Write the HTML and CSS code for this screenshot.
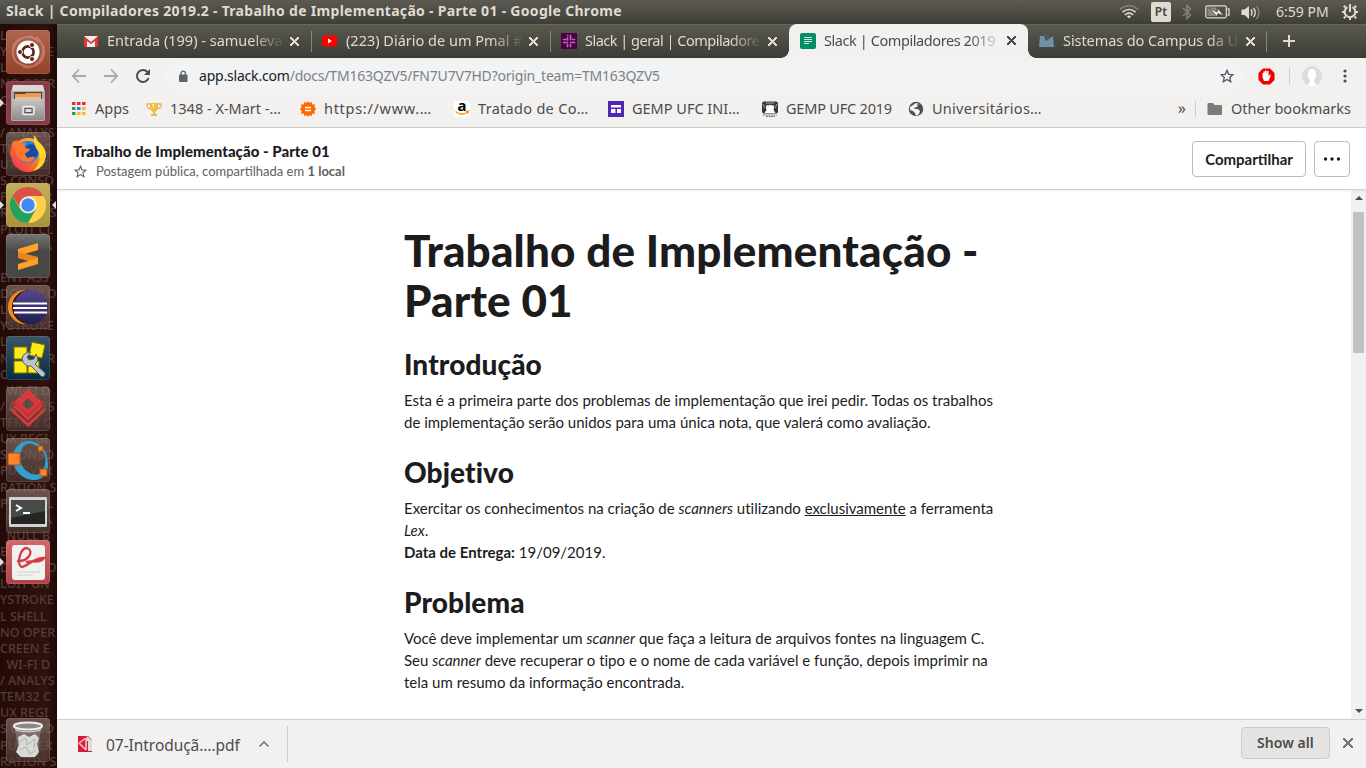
FILE: index.html
```html
<!DOCTYPE html>
<html lang="pt-BR">
<head>
<meta charset="utf-8">
<title>Slack | Compiladores 2019.2</title>
<link rel="stylesheet" href="styles.css">
</head>
<body>
<div class="screen">
<header class="panel">
  <span class="panel-title">Slack | Compiladores 2019.2 - Trabalho de Implementação - Parte 01 - Google Chrome</span>
  <div class="tray">
    <svg class="wifi" width="20" height="14" viewBox="0 0 20 14" fill="none" stroke-width="1.6"><path d="M.8 4.4Q10-3 19.2 4.4" stroke="#85827b"/><path d="M3.4 7.2Q10 1.8 16.6 7.2M5.8 9.8Q10 6.4 14.2 9.8" stroke="#dfdbd2"/><path d="M7.8 11.3Q10 9.8 12.2 11.3L10 13.5z" fill="#dfdbd2"/></svg>
    <span class="lang">Pt</span>
    <svg class="bt" width="10" height="16" viewBox="0 0 10 16" fill="none" stroke="#85827b" stroke-width="1.5"><path d="M1 4l7.500 7L5 14.500v-13L8.500 5 1 12"/></svg>
    <svg class="battery" width="25" height="14" viewBox="0 0 25 14"><rect x=".8" y=".8" width="20.500" height="12" rx="1.500" fill="none" stroke="#dfdbd2" stroke-width="1.300"/><rect x="2.500" y="2.500" width="9" height="8.600" fill="#898780"/><path d="M22.500 4h1.500v6h-1.500" fill="none" stroke="#dfdbd2" stroke-width="1.300"/><path d="M4 3l8 4 1-3.500 6 7.500-6-2.500-1 3z" fill="#eeebe3" stroke="#47463f" stroke-width=".7"/></svg>
    <svg class="volume" width="20" height="15" viewBox="0 0 20 15" fill="none" stroke-width="1.500"><path d="M.5 4.500h3L8 1v13l-4.500-4h-3z" fill="#dfdbd2"/><path d="M10 4.500q2 3 0 6M12.500 3q3.500 4.500 0 9" stroke="#dfdbd2"/><path d="M15.500 1q5 6.500 0 13" stroke="#85827b"/></svg>
    <span class="clock">6:59 PM</span>
    <svg class="gear" width="18" height="18" viewBox="0 0 18 18" fill="none" stroke="#dfdbd2"><path d="M6.500 4.200a5.300 5.300 0 1 0 5 0" stroke-width="2"/><path d="M9 1v8M4.500 4.500L2.800 2.800M13.500 4.500l1.700-1.700M3.500 9H1M14.500 9H17M4.500 13.500l-1.700 1.700M13.500 13.500l1.700 1.700M9 14.500V17" stroke-width="2"/></svg>
  </div>
</header>
<div class="desktop">
<aside class="launcher">
<pre class="wallpaper">LOIT GN
YSTROKE
L SHELL
NO OPER
CREEN E
  WI-FI D
/ ANALYS
TEM32 C
UX REGI
S CONSO
PU OVER
RATION S
PLOIT CL
  MALWA
  NULL B
ENT ASS
DOWNLO
LOIT GN
YSTROKE
L SHELL
NO OPER
CREEN E
  WI-FI D
/ ANALYS
TEM32 C
UX REGI
S CONSO
PU OVER
RATION S
PLOIT CL
  MALWA
  NULL B
ENT ASS
DOWNLO
LOIT GN
YSTROKE
L SHELL
NO OPER
CREEN E
  WI-FI D
/ ANALYS
TEM32 C
UX REGI
S CONSO
PU OVER
RATION S</pre>
  <div class="tile ubuntu"><svg viewBox="0 0 44 44"><g fill="none" stroke="#e1a891" stroke-opacity=".45" stroke-width="2"><path d="M8 27C1 10 22 1 33 12M13 34C-2 23 13 3 27 7M37 15c6 18-13 28-25 17M30 7c15 10 4 34-13 30"/></g><circle cx="22" cy="22" r="11.500" fill="#fff"/><circle cx="22" cy="22" r="5.600" fill="none" stroke="#5d2416" stroke-width="2.600"/><g fill="#5d2416" stroke="#fff"><circle cx="14" cy="22" r="2.500"/><circle cx="26" cy="15" r="2.500"/><circle cx="26" cy="29" r="2.500"/></g></svg></div>
  <div class="tile files running"><svg viewBox="0 0 44 44"><path d="M7 4h30l2 8H5z" fill="#d9d9d8"/><path d="M5 10h34v29q0 1-2 1H7q-2 0-2-1z" fill="#aaa"/><path d="M8 11h28v8H8z" fill="#65412f"/><path d="M9 13h10l1-1h15v7H9z" fill="#e99b57"/><path d="M9 16h26v3H9z" fill="#f0bd87"/><path d="M6 18h32v21H6z" fill="url(#metal)"/><rect x="17" y="25.500" width="11" height="8" rx="1" fill="none" stroke="#eee" stroke-width="1.500"/><rect x="19" y="27.500" width="7" height="4" fill="#ddd" stroke="#555"/></svg></div>
  <div class="tile"><svg viewBox="0 0 44 44"><circle cx="22" cy="23" r="17" fill="url(#fire)"/><path d="M4 24Q4 14 8 8l3 6 7-1-2 5z" fill="#ff5a36"/><circle cx="22" cy="20" r="11" fill="#1686e6"/><path d="M21 13q8-3 11 5 1 9-8 9-8-3-3-14" fill="#194aa3"/><path d="M6 11l5-3 2 5q4-3 7-2-2 3-1 5l5 1q-1 3-5 4 0 4 3 5 4-2 7-1-2 6-8 5-9-1-12-10z" fill="#ff7630"/><path d="M28 3q3 3 4 7 8 5 8 14-2 13-13 15 10-9 5-20-5-6-4-16" fill="#ffd62e"/></svg></div>
  <div class="tile chrome running focused"><svg viewBox="0 0 44 44"><circle cx="22" cy="22" r="18" fill="#ffd04c"/><path d="M6.400 13a18 18 0 0 1 31.200 0H22l-6 15z" fill="#dc5145"/><path d="M6.400 13a18 18 0 0 0 15.600 27l8-14-8 4-8-4z" fill="#24a15c"/><circle cx="22" cy="22" r="8.500" fill="#f5f3e8"/><circle cx="22" cy="22" r="6.700" fill="#4688f1"/></svg></div>
  <div class="tile sublime"><svg viewBox="0 0 44 44"><path d="M12 15l20-6v7l-20 6z" fill="#ffa02b"/><path d="M12 18l20 5v7l-20-6z" fill="#f08517"/><path d="M12 30l20-6v6l-20 6z" fill="#ffa02b"/></svg></div>
  <div class="tile"><svg viewBox="0 0 44 44"><circle cx="19" cy="22" r="17" fill="#f28a1f"/><circle cx="23" cy="22" r="17" fill="#30150e"/><circle cx="25" cy="22" r="17" fill="url(#violet)"/><path d="M7 18.500h34M7 23h34M8 27.500h33" stroke="#fff" stroke-width="2"/></svg></div>
  <div class="tile tools"><svg viewBox="0 0 44 44"><g fill="#ffeb13" stroke="#7c7108"><path d="M8 11h13v12H8zM8 25h13v12H8zM22 25h11v12H22zM26 6l13 3-3 13-13-3z"/></g><path d="M16 23q1-7 9-7l-4 5 2 3 5-1 2-5q4 7-1 10l10 9q1 3-3 4L25 30q-7 1-9-7" fill="#bbc5cb" stroke="#55626a"/></svg></div>
  <div class="tile"><svg viewBox="0 0 44 44"><path fill-rule="evenodd" d="M22 2l16 15-16 15L6 17zM22 11l-6 6 6 6 6-6z" fill="#d63b3c"/><path d="M22 27l16-14v5L22 33 6 18v-5z" fill="#bd3033"/><path d="M5 22l17 16 17-16M9 19l13 13 13-13" stroke="#d63b3c" fill="none" stroke-width="3"/></svg></div>
  <div class="tile"><svg viewBox="0 0 44 44"><path fill-rule="evenodd" d="M7 21C7 5 22-2 34 7q8 7 8 19 0 14-12 16C17 43 7 32 7 21m7-3q0 11 8 16 9 6 15-2 6-13-3-22Q17-2 14 18" fill="#31a0d0"/><g fill="#ff8428" stroke="#a64e19"><path d="M2 15h12v12H2zM32 8h5v5h-5zM34 31h7v7h-7z"/></g></svg></div>
  <div class="tile"><svg viewBox="0 0 44 44"><rect x="3" y="8" width="38" height="30" rx="1" fill="#d2d2d2"/><rect x="5" y="11" width="34" height="24" fill="#242624"/><path d="M5 11h34v11L5 29z" fill="#484a48"/><path d="M10 16l5 3-5 3" fill="none" stroke="#fff" stroke-width="2"/><path d="M17 24h7" stroke="#fff" stroke-width="2"/></svg></div>
  <div class="tile pdf running"><svg viewBox="0 0 44 44"><rect x="6" y="5" width="33" height="35" rx="3" fill="#f1f1ef"/><path d="M11 21C22 22 29 11 21 8 14 8 10 25 16 27 22 26 27 18 38 18 34 24 27 20 20 22" fill="none" stroke="#d63b43" stroke-width="2.300"/><path d="M11 32h23M11 35h16" stroke="#cfcfcd"/></svg></div>
  <div class="tile trash"><svg viewBox="0 0 44 44"><path d="M9 8l3 29q10 5 20 0l3-29" fill="#948d88" fill-opacity=".55"/><path d="M12 19l6-3 5 3 6-3 4 4-2 6 2 8-4 5H15l-5-5 3-7z" fill="#d8dad6"/><path d="M13 24l7-4 1 7 8-6-1 9M13 32l7-3 4 7 6-4" fill="none" stroke="#aeb1ad"/><ellipse cx="22" cy="8" rx="14" ry="3.500" fill="#8c8883" stroke="#eee" stroke-width="2"/><path d="M9 12q13 4 26 0" fill="none" stroke="#ddd"/></svg></div>
</aside>
<main class="browser">
  <nav class="tabs">
    <div class="tab"><svg class="favicon" viewBox="0 0 16 16"><path d="M1 3h14v11H1z" fill="#eee"/><path d="M1 14V3l7 6 7-6v11h-3V8l-4 3-4-3v6z" fill="#df3735"/></svg><span class="tab-label t1">Entrada (199) - samueleva</span><i class="close"></i></div>
    <div class="tab sep"><svg class="favicon" viewBox="0 0 16 16"><rect y="2.500" width="15" height="11" rx="2.500" fill="#f00"/><path d="M6 5.500v5L10 8z" fill="#fff"/></svg><span class="tab-label t2">(223) Diário de um Pmal #</span><i class="close"></i></div>
    <div class="tab sep"><svg class="favicon" viewBox="0 0 16 16"><path d="M0 0h16v16H0z" fill="#4b0048"/><g fill="none" stroke="#b26baf" stroke-width="1.700" stroke-linecap="round"><path d="M6.500 4.800V7M2.500 6.500h2.200M9.500 2.500v4M11.500 6.500h2M2.500 9.500h4M6.500 11.500v2M9.500 9.500h4M9.500 11.500v2M6.500 2.500h.1"/></g></svg><span class="tab-label t3">Slack | geral | Compiladore</span><i class="close"></i></div>
    <div class="tab active"><svg class="favicon" viewBox="0 0 16 16"><rect width="16" height="16" rx="2" fill="#058c62"/><path d="M4 4.500h8M4 6.500h8M4 8.500h8M4 10.500h5" stroke="#c7eee0"/></svg><span class="tab-label t4">Slack | Compiladores 2019</span><i class="close"></i></div>
    <div class="tab"><svg class="favicon" viewBox="0 0 16 16"><path d="M0 14l1-11h4l2 5 7-5 1 11z" fill="#7090a5"/><path d="M6 2q3-1 4 2L8 7z" fill="#4e5f68"/></svg><span class="tab-label t5">Sistemas do Campus da U</span><i class="close"></i></div>
    <div class="newtab sep"></div>
  </nav>
  <div class="toolbar">
    <svg class="nav" width="16" height="16" viewBox="0 0 16 16" fill="none" stroke="#aaa9a8" stroke-width="1.800"><path d="M15 8H2M8 1.500L1.800 8 8 14.500"/></svg>
    <svg class="nav" width="16" height="16" viewBox="0 0 16 16" fill="none" stroke="#aaa9a8" stroke-width="1.800"><path d="M1 8h13M8 1.500L14.200 8 8 14.500"/></svg>
    <svg class="nav" width="16" height="16" viewBox="0 0 16 16" fill="none" stroke="#4c4c4c" stroke-width="2"><path d="M13.600 10A6 6 0 1 1 12.500 4"/><path d="M15 1v6H9z" fill="#4c4c4c" stroke="none"/></svg>
    <div class="omnibox">
      <svg width="10" height="13" viewBox="0 0 10 13"><rect x="1" y="4.500" width="8.500" height="7.500" rx=".8" fill="#5f6368"/><path d="M3 5V3.300a2.200 2.200 0 0 1 4.400 0V5" fill="none" stroke="#5f6368" stroke-width="1.300"/></svg>
      <span class="url"><b>app.slack.com</b>/docs/TM163QZV5/FN7U7V7HD?origin_team=TM163QZV5</span>
      <svg class="bookmark-star" width="14" height="14" viewBox="0 0 14 14"><path d="M7 1.300l1.700 4 4.200.4-3.200 2.800 1 4.200L7 10.500l-3.700 2.200 1-4.200L1.100 5.700l4.200-.4z" fill="none" stroke="#505357" stroke-width="1.300"/></svg>
    </div>
    <svg class="adblock" width="17" height="17" viewBox="0 0 17 17"><path d="M5 .5h7L16.500 5v7L12 16.500H5L.5 12V5z" fill="#f20000"/><path d="M4.500 9V5h1v3V3.500h1.500V7 2.500h1.500V7l.5-4h1.500v5L12 6.500q1 0 .8 1L10.500 13H6z" fill="#fff"/></svg>
    <i class="rule"></i>
    <svg class="avatar" width="20" height="20" viewBox="0 0 20 20"><circle cx="10" cy="10" r="10" fill="#dcdcdc"/><path d="M6 8q0-5 4-5t4 5q0 5-2 6v1l2 4q-4 2-8 0l2-4v-1Q6 13 6 8" fill="#fff"/></svg>
    <svg width="4" height="14" viewBox="0 0 4 14" fill="#4c4c4c"><circle cx="2" cy="2" r="1.600"/><circle cx="2" cy="7" r="1.600"/><circle cx="2" cy="12" r="1.600"/></svg>
  </div>
  <div class="bookmarks">
    <a class="bm b0"><svg viewBox="0 0 16 16"><path d="M1 1h3.500v3H1zM6 1h3.500v3H6zM11 1h3.500v3H11z" fill="#e8283b"/><path d="M1 6h3.500v3H1z" fill="#24a14d"/><path d="M6 6h3.500v3H6z" fill="#347de7"/><path d="M11 6h3.500v3H11zM11 11h3.500v3H11zM6 11h3.500v3H6z" fill="#fbb520"/><path d="M1 11h3.500v3H1z" fill="#24a14d"/></svg><span>Apps</span></a>
    <a class="bm b1"><svg viewBox="0 0 16 16"><path d="M4 2h8v3q0 4-3 6v2h2v2H5v-2h2v-2Q4 9 4 5z" fill="#efbd45"/><path d="M4 3H.8q0 5 5 5M12 3h3.200q0 5-5 5" fill="none" stroke="#e8b94e" stroke-width="1.400"/><path d="M6 3h2v5z" fill="#fff1a6"/></svg><span>1348 - X-Mart -…</span></a>
    <a class="bm b2"><svg viewBox="0 0 16 16"><path d="M8 0l1.300 2L11.500.7l.8 2.800 2.800-.3-.8 2.600L16 8l-1.700 2.200.8 2.600-2.800-.3-.8 2.800L9.300 14 8 16l-1.300-2-2.200 1.300-.8-2.800-2.800.3.8-2.600L0 8l1.700-2.200-.8-2.600 2.800.3.8-2.800L6.700 2z" fill="#f60"/><path d="M5 6.500h6M5 9.500h6" stroke="#fff" stroke-width="1.500"/></svg><span>https://www.…</span></a>
    <a class="bm b3"><svg viewBox="0 0 16 16"><rect width="16" height="16" rx="2" fill="#fff"/><text x="8" y="10" text-anchor="middle" class="amazon">a</text><path d="M1.500 10.500q6 5 12 .5M11.500 10.500l3-.3-.8 2.500" fill="none" stroke="#f6a21b" stroke-width="1.500"/></svg><span>Tratado de Co…</span></a>
    <a class="bm b4"><svg viewBox="0 0 16 16"><path d="M0 0h16v16H0z" fill="#5125b5"/><path d="M3 4h10v2.500H3zM3 8h4.500v4H3zM9 8h4v4H9z" fill="#fff"/></svg><span>GEMP UFC INI…</span></a>
    <a class="bm b5"><svg viewBox="0 0 16 16"><rect y=".5" width="16" height="12" rx="2" fill="#35383a"/><path d="M4.500 4l2 .5Q8 3 9.500 4.500l2-.5q1 3 0 5l2 3h-11l2-3q-1-2 0-5" fill="#fff"/><path d="M1 3l2 4M15 3l-2 4M4 2h8" stroke="#aaa"/><path d="M1 14h14M4 15.500h9" stroke="#777" stroke-dasharray="2 .6"/></svg><span>GEMP UFC 2019</span></a>
    <a class="bm b6"><svg viewBox="0 0 16 16"><circle cx="8" cy="8" r="7.200" fill="#4d4e50"/><path d="M2 6l3-2 3-2 3 1-2 3-3 1 1 1h3l2 2-1 3-3 2-1-3-2-2-3-1z" fill="#f2f1f0"/><path d="M9 3l3 1 2 3-4-1z" fill="#4d4e50"/></svg><span>Universitários…</span></a>
    <span class="overflow">»</span><i class="rule"></i>
    <a class="bm b7"><svg viewBox="0 0 16 16"><path d="M.5 3q0-1 1-1H6l1.500 2H14q1 0 1 1v8q0 1-1 1H1.500q-1 0-1-1z" fill="#7b7b7b"/></svg><span>Other bookmarks</span></a>
  </div>
  <section class="post-header">
    <div class="post-meta">
      <div class="post-name">Trabalho de Implementação - Parte 01</div>
      <div class="post-info"><svg width="13" height="13" viewBox="0 0 13 13"><path d="M6.500 1.200l1.500 3.700 4 .3-3.100 2.600 1 3.900-3.400-2.100-3.400 2.100 1-3.900L1 5.200l4-.3z" fill="none" stroke="#616061" stroke-width="1.100"/></svg><span>Postagem pública, compartilhada em <b>1 local</b></span></div>
    </div>
    <div class="actions"><button class="share">Compartilhar</button><button class="more"><svg width="18" height="4" viewBox="0 0 18 4" fill="#1d1c1d"><circle cx="2.500" cy="2" r="1.700"/><circle cx="9" cy="2" r="1.700"/><circle cx="15.500" cy="2" r="1.700"/></svg></button></div>
  </section>
  <div class="viewport">
    <article class="doc">
      <h1>Trabalho de Implementação - Parte 01</h1>
      <h2>Introdução</h2>
      <p>Esta é a primeira parte dos problemas de implementação que irei pedir. Todas os trabalhos<br>de implementação serão unidos para uma única nota, que valerá como avaliação.</p>
      <h2>Objetivo</h2>
      <p>Exercitar os conhecimentos na criação de <em>scanners</em> utilizando <u>exclusivamente</u> a ferramenta<br><em>Lex</em>.<br><b>Data de Entrega:</b> 19/09/2019.</p>
      <h2>Problema</h2>
      <p>Você deve implementar um <em>scanner</em> que faça a leitura de arquivos fontes na linguagem C.<br>Seu <em>scanner</em> deve recuperar o tipo e o nome de cada variável e função, depois imprimir na<br>tela um resumo da informação encontrada.</p>
    </article>
    <div class="scrollbar"><i class="up"></i><i class="thumb"></i><i class="down"></i></div>
  </div>
  <footer class="downloads">
    <div class="download"><svg width="15" height="17" viewBox="0 0 15 17"><path d="M0 0h10l4 4v12H0z" fill="#d31c38"/><path d="M9 0l5 4.500V15h-4V5H8z" fill="#ddd"/><path d="M1 7l7-5M1 7l7 7M8 2v12" stroke="#f7c5cc" stroke-width="1.500" fill="none"/></svg><span>07-Introduçã….pdf</span><svg class="chevron" width="12" height="8" viewBox="0 0 12 8"><path d="M1.500 6.500L6 2l4.500 4.500" fill="none" stroke="#777" stroke-width="1.600"/></svg></div>
    <button class="showall">Show all</button><i class="close"></i>
  </footer>
</main>
</div>
</div>
<svg class="defs" width="0" height="0"><defs><linearGradient id="metal" x2="0" y2="1"><stop stop-color="#c5c5c4"/><stop offset="1" stop-color="#8c8c8b"/></linearGradient><linearGradient id="fire" x1="1" y1="0" x2="0" y2="1"><stop stop-color="#ffdc30"/><stop offset=".55" stop-color="#ff6a2b"/><stop offset="1" stop-color="#e52864"/></linearGradient><linearGradient id="violet" x2="0" y2="1"><stop stop-color="#54488e"/><stop offset="1" stop-color="#231d52"/></linearGradient></defs></svg>
</body>
</html>
```
FILE: styles.css
```css
*{box-sizing:border-box}
body{margin:0;overflow:hidden;font-family:"Noto Sans",sans-serif}
button{font:inherit;padding:0;margin:0}
.defs{position:absolute}
.screen{width:1366px;height:768px;display:flex;flex-direction:column;overflow:hidden}
.panel{height:24px;flex:none;display:flex;align-items:center;justify-content:space-between;padding:0 7px 0 6px;background:linear-gradient(#5c5a50,#3e3d39);color:#dfdbd2}
.panel-title{font-weight:700;font-size:14px;line-height:20px;margin-top:-2px;letter-spacing:.305px;white-space:nowrap}
.tray{display:flex;align-items:center}
.lang{width:20px;height:20px;margin-left:12px;border-radius:2px;background:#dfdbd2;color:#44433e;font-size:12px;font-weight:600;line-height:20px;text-align:center}
.bt{margin-left:11px}.battery{margin-left:13px}.volume{margin-left:11px}
.clock{width:53px;margin:-2px 0 0 15px;font-size:14px;white-space:nowrap}
.gear{margin-left:12px}
.desktop{flex:1;display:flex;min-height:0}
.launcher{position:relative;width:57px;flex:none;overflow:hidden;display:flex;flex-direction:column;gap:7px;padding:6px 7px 6px 6px;background:linear-gradient(90deg,#240b08,#30120d 80%,#1c0907)}
.wallpaper{position:absolute;left:0;top:4px;margin:0;font:500 12.500px/16.120px "Noto Sans",sans-serif;color:#573c37}
.tile{position:relative;width:44px;height:44px;flex:none;border-radius:4px;background:linear-gradient(rgba(150,128,122,.6),rgba(82,62,58,.6));box-shadow:inset 0 0 0 1px rgba(210,190,180,.16)}
.tile svg{display:block;width:44px;height:44px}
.tile.ubuntu{background:linear-gradient(#ae6550,#94412a)}
.tile.files{background:#873a49}
.tile.chrome{background:linear-gradient(#c3ae5a,#a8933c)}
.tile.sublime{background:linear-gradient(#777675,#484746 40%)}
.tile.tools{background:linear-gradient(#3c5568,#082c43)}
.tile.pdf{background:linear-gradient(#d16a6b,#b04449)}
.trash{margin-top:auto}
.running::before,.focused::after{content:"";position:absolute;top:18px;left:-6px;border:4px solid transparent;border-left-color:#ddd;border-right:0}
.focused::after{left:46px;border-left:0;border-right:4px solid #ddd}
.browser{flex:1;display:flex;flex-direction:column;min-width:0;background:#fff}
.tabs{height:34px;flex:none;display:flex;padding-left:15px;background:linear-gradient(#5b5a4f,#3c3b37);border-top:1px solid #68675a}
.tab{position:relative;width:239px;height:33px;flex:none;display:flex;align-items:center;padding:0 11px 1px 11px;color:#dfdbd2;font-size:14.500px}
.sep::before{content:"";position:absolute;left:0;top:6px;width:1px;height:21px;background:#87867f}
.favicon{width:16px;height:16px;flex:none}
.tab-label{width:178px;margin:-2px 0 0 8px;overflow:hidden;white-space:nowrap;-webkit-mask-image:linear-gradient(90deg,#000 145px,transparent 178px);mask-image:linear-gradient(90deg,#000 145px,transparent 178px)}
.t3{letter-spacing:-.500px}.t4{letter-spacing:-.420px}.t5{letter-spacing:-.080px}
.close{position:relative;width:9px;height:9px;flex:none;margin-left:5px;background:linear-gradient(45deg,transparent 44%,currentColor 44% 56%,transparent 56%),linear-gradient(-45deg,transparent 44%,currentColor 44% 56%,transparent 56%)}
.active{margin-top:-1px;height:34px;border-radius:8px 8px 0 0;background:#f2f1f0;color:#4c4c4c}
.active::before,.active::after{content:"";position:absolute;bottom:0;width:8px;height:8px;background:radial-gradient(circle at 0 0,transparent 7.500px,#f2f1f0 8px)}
.active::before{left:-8px}.active::after{right:-8px;background:radial-gradient(circle at 100% 0,transparent 7.500px,#f2f1f0 8px)}
.newtab{position:relative;width:46px;margin-left:-1px;background:linear-gradient(#dfdbd2,#dfdbd2) 17px 15px/12px 2px no-repeat,linear-gradient(#dfdbd2,#dfdbd2) 22px 10px/2px 12px no-repeat}
.toolbar{height:36px;flex:none;display:flex;align-items:center;padding:0 19px 0 14px;background:#f2f1f0}
.nav{margin-right:16px;flex:none}
.omnibox{width:1078px;flex:none;height:28px;border-radius:14px;background:#f1f3f4;display:flex;align-items:center;padding:0 9px 0 13px;margin-left:-2px}
.url{margin:-2px 0 0 11px;font-size:14px;color:#7d8185;white-space:nowrap;letter-spacing:-.200px}
.url b{font-weight:400;color:#202124}
.bookmark-star{margin-left:auto}
.adblock{margin-left:15px;flex:none}
.rule{width:1px;height:16px;background:#cfcecd;flex:none}
.toolbar .rule{margin-left:14px}
.avatar{margin-left:12px;flex:none}
.toolbar>svg:last-child{margin-left:auto}
.bookmarks{height:34px;flex:none;display:flex;align-items:center;padding:0 14px 4px;background:#f2f1f0;border-bottom:1px solid #cdccca;font-size:14.500px;color:#4c4c4c}
.bm{display:flex;align-items:center;gap:8px;white-space:nowrap}
.bm span{margin-top:-2px}
.bm svg{width:16px;height:16px;flex:none}
.b0{width:75px}.b1{width:154px}.b2{width:154px;letter-spacing:.700px}.b3{width:154px;letter-spacing:.300px}.b4{width:154px}.b5{width:146px;letter-spacing:-.200px}.b6{width:134px;letter-spacing:.270px}
.amazon{font:700 15px "Noto Sans",sans-serif;letter-spacing:0}
.overflow{margin:-2px 0 0 auto;font-size:16px}
.bookmarks .rule{margin:0 11px 0 9px}
.b7 span{width:121px}
.post-header{height:62px;flex:none;display:flex;justify-content:space-between;padding:13px 16px 0;border-bottom:1px solid #d4d4d4;box-shadow:0 1px 2px rgba(0,0,0,.08);font-family:Lato,sans-serif;color:#1d1c1d;position:relative}
.post-meta{margin-top:-1px}
.post-name{font-size:15px;line-height:22px;font-weight:900;letter-spacing:.040px}
.post-info{display:flex;align-items:center;font-size:13px;line-height:18px;color:#616061;gap:9px;padding-left:1px}
.actions{display:flex;gap:8px}
.share,.more{height:36px;border:1px solid #bbb;border-radius:4px;background:#fff;color:#1d1c1d;font-weight:700;font-size:15px}
.share{width:114px}
.more{width:36px;display:flex;align-items:center;justify-content:center}
.viewport{flex:1;min-height:0;display:flex;justify-content:space-between;overflow:hidden}
.doc{margin-left:347px;padding-top:35px;width:610px;font:15px/22px Lato,sans-serif;color:#1d1c1d;font-variant-ligatures:none}
.doc h1{margin:0;font-size:44px;line-height:50px;font-weight:900;letter-spacing:.150px}
.doc h2{margin:21px 0 7px;font-size:28px;line-height:36px;font-weight:900;letter-spacing:.100px}
.doc p{margin:0;white-space:nowrap}
.scrollbar{width:15px;background:#f1f1f1;display:flex;flex-direction:column;align-items:center;padding:6px 0 6px}
.up,.down{border:4px solid transparent;border-bottom-color:#505050;border-top:0}
.down{margin-top:auto;border-top:4px solid #505050;border-bottom:0}
.thumb{width:11px;height:141px;margin-top:12px;background:#c1c1c1}
.downloads{height:49px;flex:none;border-top:1px solid #cdd0d0;background:#f2f1f0;display:flex;align-items:center;padding:0 13px 0 0;color:#4c4c4c}
.download{height:36px;width:231px;display:flex;align-items:center;padding-left:21px;border-right:1px solid #cdcccb;font-size:15.500px}
.download span{margin:1px 0 0 13px;width:134px;white-space:nowrap;letter-spacing:-.050px}
.chevron{margin-left:18px}
.showall{width:89px;height:32px;margin:-2px 0 0 auto;border:1px solid #cdcccb;border-radius:4px;background:#e4e3e2;color:#4c4c4c;font-size:14px;line-height:28px;font-weight:600;letter-spacing:.050px}
.downloads .close{width:10px;height:10px;margin:-2px 0 0 13px;color:#777}
```
